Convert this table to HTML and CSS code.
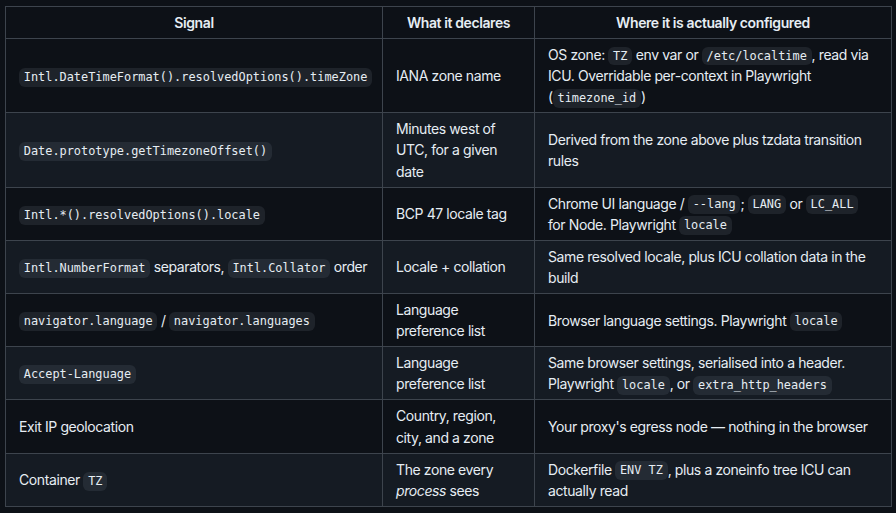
FILE: index.html
```html
<!DOCTYPE html>
<html>
<head>
<meta charset="utf-8">
<link rel="stylesheet" href="styles.css">
</head>
<body>
<table class="sig-table">
  <colgroup>
    <col class="c1">
    <col class="c2">
    <col class="c3">
  </colgroup>
  <thead>
    <tr><th>Signal</th><th>What it declares</th><th>Where it is actually configured</th></tr>
  </thead>
  <tbody>
    <tr>
      <td><code>Intl.DateTimeFormat().resolvedOptions().timeZone</code></td>
      <td>IANA zone name</td>
      <td>OS zone: <code>TZ</code> env var or <code>/etc/localtime</code>, read via ICU. Overridable per-context in Playwright (<code>timezone_id</code>)</td>
    </tr>
    <tr>
      <td><code>Date.prototype.getTimezoneOffset()</code></td>
      <td>Minutes west of UTC, for a given date</td>
      <td>Derived from the zone above plus tzdata transition rules</td>
    </tr>
    <tr>
      <td><code>Intl.*().resolvedOptions().locale</code></td>
      <td>BCP 47 locale tag</td>
      <td>Chrome UI language / <code>--lang</code>; <code>LANG</code> or <code>LC_ALL</code> for Node. Playwright <code>locale</code></td>
    </tr>
    <tr>
      <td><code>Intl.NumberFormat</code> separators, <code>Intl.Collator</code> order</td>
      <td>Locale + collation</td>
      <td>Same resolved locale, plus ICU collation data in the build</td>
    </tr>
    <tr>
      <td><code>navigator.language</code> / <code>navigator.languages</code></td>
      <td>Language preference list</td>
      <td>Browser language settings. Playwright <code>locale</code></td>
    </tr>
    <tr>
      <td><code>Accept-Language</code></td>
      <td>Language preference list</td>
      <td>Same browser settings, serialised into a header. Playwright <code>locale</code>, or <code>extra_http_headers</code></td>
    </tr>
    <tr>
      <td>Exit IP geolocation</td>
      <td>Country, region, city, and a zone</td>
      <td>Your proxy's egress node — nothing in the browser</td>
    </tr>
    <tr>
      <td>Container <code>TZ</code></td>
      <td>The zone every <em>process</em> sees</td>
      <td>Dockerfile <code>ENV TZ</code>, plus a zoneinfo tree ICU can actually read</td>
    </tr>
  </tbody>
</table>
</body>
</html>
```
FILE: styles.css
```css
html, body {
  margin: 0;
  background: #0d1117;
}
body {
  padding: 6px 5px;
  color: #e6edf3;
  font-family: "Inter", "Liberation Sans", sans-serif;
  font-size: 14px;
  line-height: 21.15px;
  letter-spacing: -0.4px;
}
.sig-table {
  border-collapse: collapse;
  border-spacing: 0;
  width: 886px;
  table-layout: fixed;
}
.c1 { width: 377px; }
.c2 { width: 152px; }
.c3 { width: 357px; }
.sig-table th,
.sig-table td {
  border: 1px solid #3d444d;
  padding: 4.95px 13px;
  vertical-align: middle;
}
.sig-table th {
  font-weight: 600;
  text-align: center;
}
.sig-table td {
  text-align: left;
}
.sig-table tbody tr:nth-child(even) {
  background: #151b23;
}
.sig-table code {
  font-family: "DejaVu Sans Mono", "Liberation Mono", monospace;
  font-size: 11.9px;
  line-height: 1;
  letter-spacing: 0;
  padding: 0.2em 0.4em;
  border-radius: 6px;
  background: rgba(101, 108, 118, 0.2);
  color: #e6edf3;
  white-space: nowrap;
}
.sig-table em {
  font-style: italic;
}
```
